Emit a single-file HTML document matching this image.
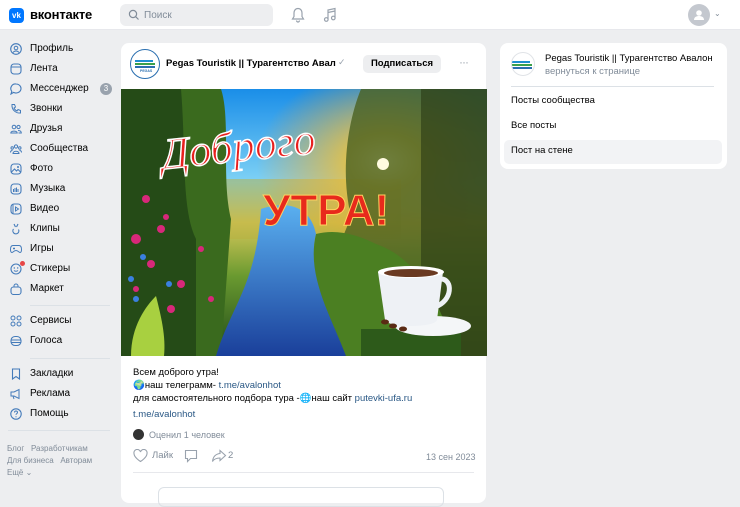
<!DOCTYPE html>
<html><head><meta charset="utf-8"><style>
*{box-sizing:border-box;margin:0;padding:0}
body{width:740px;height:487px;overflow:hidden;background:#edeef0;font-family:"Liberation Sans",sans-serif;color:#000;font-size:10px;position:relative}
.hdr{position:absolute;left:0;top:0;width:740px;height:30px;background:#fff;border-bottom:1px solid #e7e8ec}
.abs{position:absolute}
.menu div{position:absolute;left:30px;font-size:10px;line-height:12px;color:#000}
.ic{position:absolute;left:10px;width:12px;height:12px}
.card{position:absolute;background:#fff;border-radius:8px}
.link{color:#2a5885}
.gray{color:#818c99}
</style></head><body>
<div class="hdr">
  <div class="abs" style="left:9px;top:8px;width:15px;height:15px;background:#0077ff;border-radius:4px;color:#fff;font-weight:bold;font-size:8px;line-height:15px;text-align:center">vk</div>
  <div class="abs" style="left:30px;top:7px;font-size:13px;font-weight:bold;letter-spacing:-0.2px">вконтакте</div>
  <div class="abs" style="left:120px;top:4px;width:153px;height:22px;background:#edeef0;border-radius:6px"></div>
  <svg class="abs" style="left:128px;top:9px" width="12" height="12" viewBox="0 0 12 12"><circle cx="5" cy="5" r="3.6" fill="none" stroke="#818c99" stroke-width="1.2"/><path d="M7.7 7.7L10.5 10.5" stroke="#818c99" stroke-width="1.2"/></svg>
  <div class="abs gray" style="left:144px;top:10px;font-size:10px">Поиск</div>
  <svg class="abs" style="left:291px;top:7px" width="14" height="16" viewBox="0 0 14 16"><path d="M7 1.5C4.5 1.5 3 3.5 3 6v3.5L1.5 12h11L11 9.5V6c0-2.5-1.5-4.5-4-4.5zM5.5 13.5a1.5 1.5 0 003 0" fill="none" stroke="#99a2ad" stroke-width="1.2"/></svg>
  <svg class="abs" style="left:323px;top:7px" width="14" height="16" viewBox="0 0 14 16"><path d="M5 12V3l7-1.5v9M5 5.5l7-1.5" fill="none" stroke="#99a2ad" stroke-width="1.2"/><circle cx="3.3" cy="12.5" r="1.8" fill="none" stroke="#99a2ad" stroke-width="1.2"/><circle cx="10.3" cy="11" r="1.8" fill="none" stroke="#99a2ad" stroke-width="1.2"/></svg>
  <div class="abs" style="left:688px;top:4px;width:22px;height:22px;border-radius:50%;background:#c4c8cf"></div>
  <svg class="abs" style="left:692px;top:8px" width="14" height="14" viewBox="0 0 14 14"><circle cx="7" cy="5" r="2.8" fill="#fff"/><path d="M2 12c0-3 2.5-4 5-4s5 1 5 4z" fill="#fff"/></svg>
  <div class="abs gray" style="left:714px;top:9px;font-size:8px">⌄</div>
</div>

<div class="menu">
<div style="top:43px">Профиль</div><svg class="ic" style="top:43px" viewBox="0 0 12 12"><circle cx="6" cy="6" r="5.3" fill="none" stroke="#447bba" stroke-width="1.1"/><circle cx="6" cy="5" r="1.8" fill="none" stroke="#447bba"/><path d="M3 9.5c1.5-2 4.5-2 6 0" fill="none" stroke="#447bba"/></svg>
<div style="top:63px">Лента</div><svg class="ic" style="top:63px" viewBox="0 0 12 12"><rect x="1" y="1" width="10" height="10" rx="3" fill="none" stroke="#447bba" stroke-width="1.1"/><path d="M1 4h10" stroke="#447bba"/></svg>
<div style="top:83px">Мессенджер</div><svg class="ic" style="top:83px" viewBox="0 0 12 12"><path d="M6 1a5 4.5 0 11-2.5 8.4L1 11l.8-2.6A4.6 4.6 0 016 1z" fill="none" stroke="#447bba" stroke-width="1.1"/></svg>
<div class="abs" style="left:100px;top:83px;width:12px;height:12px;border-radius:6px;background:#99a2ad;color:#fff;font-size:8px;line-height:12px;text-align:center">3</div>
<div style="top:103px">Звонки</div><svg class="ic" style="top:103px" viewBox="0 0 12 12"><path d="M2 1.5l2.5 0 1 2.5-1.5 1c.7 1.5 1.7 2.5 3 3l1-1.5 2.5 1v2.5c-5 .5-9-3.5-8.5-8.5z" fill="none" stroke="#447bba" stroke-width="1"/></svg>
<div style="top:123px">Друзья</div><svg class="ic" style="top:123px" viewBox="0 0 12 12"><circle cx="4" cy="4" r="1.8" fill="none" stroke="#447bba"/><circle cx="8.5" cy="4" r="1.6" fill="none" stroke="#447bba"/><path d="M.8 10c0-2.5 6.4-2.5 6.4 0zM8 7.5c2 0 3.3.8 3.3 2.5H8.5" fill="none" stroke="#447bba"/></svg>
<div style="top:143px">Сообщества</div><svg class="ic" style="top:143px" viewBox="0 0 12 12"><circle cx="6" cy="3.5" r="1.6" fill="none" stroke="#447bba"/><circle cx="2.2" cy="5" r="1.2" fill="none" stroke="#447bba"/><circle cx="9.8" cy="5" r="1.2" fill="none" stroke="#447bba"/><path d="M3 10.5c0-3 6-3 6 0zM.5 9.5c0-1.5 1-2 2-2M11.5 9.5c0-1.5-1-2-2-2" fill="none" stroke="#447bba"/></svg>
<div style="top:163px">Фото</div><svg class="ic" style="top:163px" viewBox="0 0 12 12"><rect x="1" y="1" width="10" height="10" rx="3" fill="none" stroke="#447bba" stroke-width="1.1"/><path d="M1.5 9l3-3 2 2 1.5-1.5 2.5 2.5" fill="none" stroke="#447bba"/><circle cx="8" cy="4" r="1" fill="#447bba"/></svg>
<div style="top:183px">Музыка</div><svg class="ic" style="top:183px" viewBox="0 0 12 12"><rect x="1" y="1" width="10" height="10" rx="3" fill="none" stroke="#447bba" stroke-width="1.1"/><path d="M3.5 9V6M5 9V5M6.5 9V4.5M8 9V6" stroke="#447bba"/></svg>
<div style="top:203px">Видео</div><svg class="ic" style="top:203px" viewBox="0 0 12 12"><rect x="1" y="1" width="10" height="10" rx="3" fill="none" stroke="#447bba" stroke-width="1.1"/><path d="M3 1v10" stroke="#447bba"/><path d="M5.5 4v4l3-2z" fill="none" stroke="#447bba"/></svg>
<div style="top:223px">Клипы</div><svg class="ic" style="top:223px" viewBox="0 0 12 12"><path d="M4 1l1.5 3M8 1L6.5 4M3.5 6a3 3 0 105 .5" fill="none" stroke="#447bba" stroke-width="1.1"/></svg>
<div style="top:243px">Игры</div><svg class="ic" style="top:243px" viewBox="0 0 12 12"><path d="M3 2.5h6c1.5 0 2.5 1.5 2.5 4s-.5 3-1.5 3-2-2-4-2-3 2-4 2-1.5-.5-1.5-3 1-4 2.5-4z" fill="none" stroke="#447bba" stroke-width="1"/><path d="M3 5.5h2M4 4.5v2" stroke="#447bba"/></svg>
<div style="top:263px">Стикеры</div><svg class="ic" style="top:263px" viewBox="0 0 12 12"><circle cx="6" cy="6" r="5" fill="none" stroke="#447bba" stroke-width="1.1"/><circle cx="4.3" cy="5" r=".7" fill="#447bba"/><circle cx="7.7" cy="5" r=".7" fill="#447bba"/><path d="M4 7.5c1 1 3 1 4 0" fill="none" stroke="#447bba"/></svg>
<div class="abs" style="left:20px;top:261px;width:5px;height:5px;border-radius:50%;background:#e64646"></div>
<div style="top:283px">Маркет</div><svg class="ic" style="top:283px" viewBox="0 0 12 12"><rect x="1" y="4" width="10" height="7.5" rx="2.5" fill="none" stroke="#447bba" stroke-width="1.1"/><path d="M4 4V3a2 2 0 014 0v1" fill="none" stroke="#447bba"/></svg>
<div class="abs" style="left:30px;top:305px;width:80px;height:1px;background:#dce1e6"></div>
<div style="top:315px">Сервисы</div><svg class="ic" style="top:315px" viewBox="0 0 12 12"><circle cx="3" cy="3" r="2" fill="none" stroke="#447bba"/><circle cx="9" cy="3" r="2" fill="none" stroke="#447bba"/><circle cx="3" cy="9" r="2" fill="none" stroke="#447bba"/><circle cx="9" cy="9" r="2" fill="none" stroke="#447bba"/></svg>
<div style="top:335px">Голоса</div><svg class="ic" style="top:335px" viewBox="0 0 12 12"><rect x="1" y="1.5" width="10" height="9" rx="4" fill="none" stroke="#447bba" stroke-width="1.1"/><path d="M1 5h10M1 7.5h10" stroke="#447bba"/></svg>
<div class="abs" style="left:30px;top:358px;width:80px;height:1px;background:#dce1e6"></div>
<div style="top:368px">Закладки</div><svg class="ic" style="top:368px" viewBox="0 0 12 12"><path d="M2.5 1h7v10L6 8.5 2.5 11z" fill="none" stroke="#447bba" stroke-width="1.1"/></svg>
<div style="top:388px">Реклама</div><svg class="ic" style="top:388px" viewBox="0 0 12 12"><path d="M1 4h3l5-2.5v9L4 8H1zM3 8l1 3" fill="none" stroke="#447bba" stroke-width="1"/></svg>
<div style="top:408px">Помощь</div><svg class="ic" style="top:408px" viewBox="0 0 12 12"><circle cx="6" cy="6" r="5.2" fill="none" stroke="#447bba" stroke-width="1.1"/><path d="M4.5 4.5a1.5 1.5 0 113 0c0 1-1.5 1.2-1.5 2.3" fill="none" stroke="#447bba"/><circle cx="6" cy="8.8" r=".6" fill="#447bba"/></svg>
<div class="abs" style="left:8px;top:430px;width:102px;height:1px;background:#dce1e6"></div>
</div>
<div class="abs gray" style="left:7px;top:443px;font-size:8px;line-height:12px">Блог&nbsp;&nbsp;&nbsp;Разработчикам<br>Для бизнеса&nbsp;&nbsp;&nbsp;Авторам<br>Ещё ⌄</div>

<div class="card" style="left:121px;top:43px;width:365px;height:460px">
  <div class="abs" style="left:9px;top:6px;width:30px;height:30px;border-radius:50%;border:1px solid #2a6fb0;background:#fff;overflow:hidden">
    <div class="abs" style="left:4px;top:10px;width:18px;height:2px;background:#1e8fd0"></div>
    <div class="abs" style="left:4px;top:13px;width:20px;height:2px;background:#3aa04a"></div>
    <div class="abs" style="left:4px;top:16px;width:20px;height:2px;background:#2a6fb0"></div>
    <div class="abs" style="left:9px;top:19px;font-size:3.5px;color:#2a6fb0;font-weight:bold">PEGAS</div>
  </div>
  <div class="abs" style="left:45px;top:15px;width:170px;overflow:hidden;font-size:9.5px;font-weight:bold;white-space:nowrap">Pegas Touristik || Турагентство Авал<span style="color:#c5c9cf">о</span></div>
  <div class="abs" style="left:217px;top:14px;color:#99a2ad;font-size:9px">✓</div>
  <div class="abs" style="left:242px;top:12px;width:78px;height:18px;border-radius:5px;background:#edeef0;font-size:9.5px;font-weight:bold;text-align:center;line-height:18px">Подписаться</div>
  <div class="abs" style="left:338px;top:12px;color:#a5acb5;font-size:12px;letter-spacing:-1px">···</div>
  <svg class="abs" style="left:0;top:46px" width="366" height="267" viewBox="0 0 366 267">
    <defs>
      <linearGradient id="sky" x1="0" y1="0" x2="0" y2="1"><stop offset="0" stop-color="#1a8ee8"/><stop offset=".35" stop-color="#7fd2f5"/><stop offset=".5" stop-color="#d7c85a"/><stop offset=".7" stop-color="#6a9a30"/><stop offset="1" stop-color="#1f4a18"/></linearGradient>
      <radialGradient id="sun" cx=".72" cy=".27" r=".35"><stop offset="0" stop-color="#fff6b0" stop-opacity="1"/><stop offset=".3" stop-color="#f5c030" stop-opacity=".8"/><stop offset="1" stop-color="#f5a020" stop-opacity="0"/></radialGradient>
      <linearGradient id="riv" x1="0" y1="0" x2="0" y2="1"><stop offset="0" stop-color="#5ab0f0"/><stop offset="1" stop-color="#1a3f9a"/></linearGradient>
    </defs>
    <rect width="366" height="267" fill="url(#sky)"/>
    <rect x="100" y="90" width="180" height="60" fill="#b8b040" opacity=".5"/>
    <rect width="366" height="267" fill="url(#sun)"/>
    <path d="M0 0h100c10 30 0 90 10 130l-10 137H0z" fill="#3a6a1e"/>
    <path d="M0 0h60c5 60 0 120 15 150v117H0z" fill="#1d3f14" opacity=".7"/>
    <path d="M240 0h126v267H200c-10-60 20-110 30-140-10-40-5-90 10-127z" fill="#4a6020" opacity=".8"/>
    <path d="M300 0h66v267h-66z" fill="#2a3a14" opacity=".6"/>
    <path d="M140 120c30-10 50 0 55 25-10 40 20 80 30 122H95c15-50 40-70 45-147z" fill="url(#riv)"/>
    <path d="M195 145c20-5 40 0 60 10 30 10 60 40 80 112H225c-15-40-40-80-30-122z" fill="#4b7f22"/>
    <path d="M240 240h100v27H240z" fill="#2d5a1a"/>
    <circle cx="262" cy="75" r="6" fill="#fffbe0"/>
    <g fill="#d8287a"><circle cx="25" cy="110" r="4"/><circle cx="15" cy="150" r="5"/><circle cx="40" cy="140" r="4"/><circle cx="30" cy="175" r="4"/><circle cx="60" cy="195" r="4"/><circle cx="15" cy="200" r="3"/><circle cx="50" cy="220" r="4"/><circle cx="80" cy="160" r="3"/><circle cx="45" cy="128" r="3"/><circle cx="90" cy="210" r="3"/></g>
    <g fill="#3a80e0"><circle cx="22" cy="168" r="3"/><circle cx="10" cy="190" r="3"/><circle cx="15" cy="210" r="3"/><circle cx="48" cy="195" r="3"/></g>
    <path d="M10 267c0-30 15-50 25-60 5 20 10 40 8 60z" fill="#a8d040"/>
    <text x="40" y="74" font-family="Liberation Serif,serif" font-style="italic" font-size="44" fill="#e8201e" stroke="#fff" stroke-width="1.5" transform="rotate(-6 100 60)">Доброго</text>
    <text x="142" y="136" font-family="Liberation Sans,sans-serif" font-weight="bold" font-size="44" fill="#e82a1c" stroke="#ffd060" stroke-width="1">УТРА!</text>
    <ellipse cx="312" cy="237" rx="38" ry="10" fill="#f4f6f8"/>
    <path d="M257 183h65l-6 48c-2 8-50 8-52 0z" fill="#eef1f5"/>
    <path d="M320 190c12 0 12 22-6 28" fill="none" stroke="#eef1f5" stroke-width="5"/>
    <ellipse cx="290" cy="183" rx="33" ry="6" fill="#fff"/>
    <ellipse cx="290" cy="184" rx="27" ry="4" fill="#6a3a22"/>
    <g fill="#5a2a14"><ellipse cx="264" cy="233" rx="4" ry="2.5"/><ellipse cx="272" cy="237" rx="4" ry="2.5"/><ellipse cx="282" cy="240" rx="4" ry="2.5"/></g>
  </svg>
  <div class="abs" style="left:12px;top:323px;font-size:9.5px;line-height:13px;white-space:nowrap">Всем доброго утра!<br>🌍наш телеграмм- <span class="link">t.me/avalonhot</span><br>для самостоятельного подбора тура -🌐наш сайт <span class="link">putevki-ufa.ru</span></div>
  <div class="abs link" style="left:12px;top:366px;font-size:9.5px">t.me/avalonhot</div>
  <div class="abs" style="left:12px;top:386px;width:11px;height:11px;border-radius:50%;background:#333"></div>
  <div class="abs gray" style="left:28px;top:387px;font-size:9px">Оценил 1 человек</div>
  <svg class="abs" style="left:12px;top:406px" width="15" height="14" viewBox="0 0 15 14"><path d="M7.5 12.5S1 8.5 1 4.5A3 3 0 017.5 3 3 3 0 0114 4.5c0 4-6.5 8-6.5 8z" fill="none" stroke="#99a2ad" stroke-width="1.1"/></svg>
  <div class="abs gray" style="left:31px;top:407px;font-size:9.5px">Лайк</div>
  <svg class="abs" style="left:63px;top:406px" width="14" height="14" viewBox="0 0 14 14"><path d="M1.5 1.5h11v8h-6l-3 3v-3h-2z" fill="none" stroke="#99a2ad" stroke-width="1.1"/></svg>
  <svg class="abs" style="left:90px;top:406px" width="16" height="14" viewBox="0 0 16 14"><path d="M9 1.5l5.5 5-5.5 5V9C5 9 3 10 1.5 12.5 2 8 4.5 5 9 4.5z" fill="none" stroke="#99a2ad" stroke-width="1.1"/></svg>
  <div class="abs gray" style="left:107px;top:407px;font-size:9.5px">2</div>
  <div class="abs gray" style="left:305px;top:409px;font-size:9px">13 сен 2023</div>
  <div class="abs" style="left:12px;top:429px;width:341px;height:1px;background:#e7e8ec"></div>
  <div class="abs" style="left:37px;top:444px;width:286px;height:20px;border:1px solid #dce1e6;border-radius:6px"></div>
</div>

<div class="card" style="left:500px;top:43px;width:227px;height:126px">
  <div class="abs" style="left:11px;top:9px;width:24px;height:24px;border-radius:50%;border:1px solid #e0e3e7;background:#fff;overflow:hidden">
    <div class="abs" style="left:0;top:8px;width:18px;height:2px;background:#1e8fd0"></div>
    <div class="abs" style="left:0;top:11px;width:20px;height:2px;background:#3aa04a"></div>
    <div class="abs" style="left:0;top:14px;width:20px;height:2px;background:#2a6fb0"></div>
  </div>
  <div class="abs" style="left:45px;top:10px;width:170px;overflow:hidden;text-overflow:ellipsis;font-size:9.5px;white-space:nowrap">Pegas Touristik || Турагентство Авалон</div>
  <div class="abs gray" style="left:45px;top:23px;font-size:9.5px">вернуться к странице</div>
  <div class="abs" style="left:11px;top:43px;width:203px;height:1px;background:#dce1e6"></div>
  <div class="abs" style="left:11px;top:52px;font-size:9.5px">Посты сообщества</div>
  <div class="abs" style="left:11px;top:77px;font-size:9.5px">Все посты</div>
  <div class="abs" style="left:4px;top:97px;width:218px;height:24px;background:#f2f3f5;border-radius:5px"></div>
  <div class="abs" style="left:11px;top:102px;font-size:9.5px">Пост на стене</div>
</div>
</body></html>
